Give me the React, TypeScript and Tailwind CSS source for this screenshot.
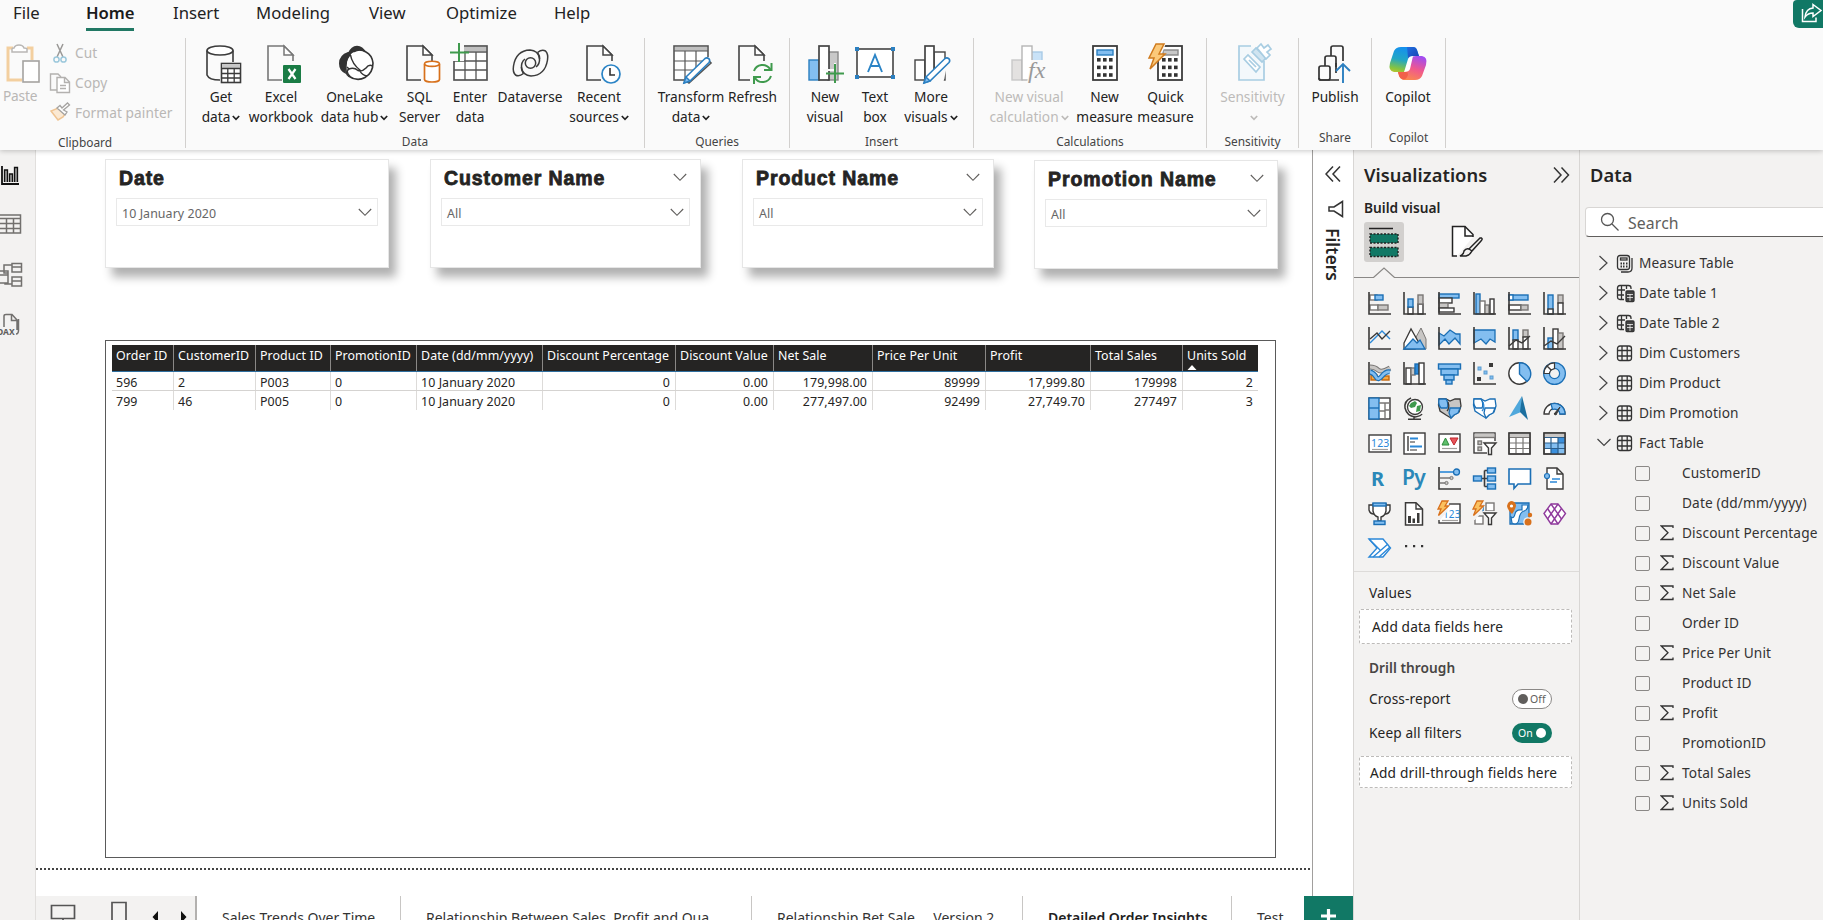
import React from 'react';

const K = '#3b3a39';
const B = '#83bef0';
const BS = '#1b6fb5';
const G = '#c8c6c4';
const GS = '#797775';

type BoxProps = { x: number; y: number; w: number; h: number; f?: string; s?: string; sw?: number; r?: number };
const Box = ({ x, y, w, h, f = '#fff', s = K, sw = 1.4, r = 0 }: BoxProps) => (
  <rect x={x} y={y} width={w} height={h} fill={f} stroke={s} strokeWidth={sw} rx={r} />
);
const Line = ({ d, s = K, w = 1.4, f = 'none' }: { d: string; s?: string; w?: number; f?: string }) => (
  <path d={d} stroke={s} strokeWidth={w} fill={f} />
);

/* ---------- Ribbon icons (40 x 40 grid) ---------- */
const Page = ({ x = 5, s = '#444' }: { x?: number; s?: string }) => (
  <g transform={`translate(${x} 0)`}>
    <Line d="M15 37H1V3H17L26 12V18" s={s} w={1.6} f="none" />
    <Line d="M17 3V12H26Z" s={s} w={1.5} f="#fff" />
  </g>
);
const Pencil = () => (
  <g>
    <path d="M36 16L15 38L18 40L40 20Z" fill="#fafafa" />
    <Line d="M15 34L34 15.5Q36 14 38 15.8Q39.4 18 38 19.5L19 38L13 40Z" s="#2b7fc0" w={1.6} f="#fff" />
    <path d="M15 34L19 38L13 40Z" fill="#83bef0" stroke="#2b7fc0" strokeWidth={1.4} />
  </g>
);
const Bolt = () => <path d="M9 0H17L12 10H18L3 25L7 14H2Z" fill="#fbc97a" stroke="#d07b1e" strokeWidth={1.5} />;
const Keys = ({ x }: { x: number }) => (
  <g fill="#333">
    {[0, 1, 2].map((r) => [0, 1, 2].map((c) => <rect key={`${r}${c}`} x={x + c * 6} y={15 + r * 7.6} width={3.6} height={3.6} />))}
  </g>
);

const ribbonIcons: Record<string, React.ReactNode> = {
  getData: (
    <g fill="none" stroke="#3b3b3b" strokeWidth={1.6}>
      <ellipse cx={19} cy={7.5} rx={13} ry={4.5} fill="#fff" />
      <path d="M6 7.5V32Q8 37 19 37M32 7.5V19" />
      <rect x={20.5} y={20.5} width={19} height={19} fill="#fff" />
      <rect x={21} y={21} width={18} height={4} fill="#c8c8c8" stroke="none" />
      <path d="M20 25.5H40M20 30.5H40M20 35H40M26.8 25V40M33.2 25V40" strokeWidth={1.3} />
    </g>
  ),
  excel: (
    <g>
      <Page x={6} s="#777" />
      <rect x={22} y={22} width={18} height={18} fill="#1a7c45" rx={1} />
      <path d="M27.500 26L34.500 36M34.500 26L27.500 36" stroke="#fff" strokeWidth={2.2} />
    </g>
  ),
  onelake: (
    <g transform="translate(0 0)">
      <path d="M13 10Q16 8.500 19 8.500Q25 5 31 9Q37 12 38 20Q38 30 30 34.500Q22 39 13.500 33Q10 30 11 22Q11 14 16 10Z" fill="#fff" stroke="#333" strokeWidth={1.600} />
      <path d="M13 9Q4 12 4 20.500Q4 28 11 31Q9 20 16 11.500Z" fill="#333" />
      <path d="M13 10Q16 3 22 2.700Q28 3 31 9Q22 5 15 11.500Z" fill="#333" />
      <path d="M15.500 12Q17 21 25.500 27.500M15 33.500Q10 28 14 26Q19 24 23 27.500Q27 29 31 25Q34 21 37.500 23M25 28Q27 32 32 33M12 24L14 26" fill="none" stroke="#333" strokeWidth={1.500} />
    </g>
  ),
  sql: (
    <g>
      <Page x={6} />
      <path d="M24 20H40V40H24Z" fill="#fafafa" />
      <path d="M24.5 21V36.5Q25 39 32 39Q39 39 39.5 36.5V21" fill="#fff" stroke="#d8711c" strokeWidth={1.7} />
      <ellipse cx={32} cy={20.8} rx={7.5} ry={2.6} fill="#fff" stroke="#d8711c" strokeWidth={1.6} />
    </g>
  ),
  enter: (
    <g fill="none" stroke="#555" strokeWidth={1.7}>
      <rect x={4} y={3} width={33} height={34} fill="#fff" />
      <rect x={5} y={4} width={31} height={4} fill="#c0c0c0" stroke="none" />
      <path d="M4 9H37M4 18H37M4 27H37M15 9V37M26 9V37" strokeWidth={1.3} />
      <path d="M0 0H14V18H0Z" fill="#fafafa" stroke="none" />
      <path d="M9 0V19M0 9.5H19" stroke="#3f9a4d" strokeWidth={2} />
    </g>
  ),
  dataverse: (
    <g fill="none" stroke="#3b3b3b" strokeWidth={1.500}>
      <circle cx={20.500} cy={20} r={5.200} />
      <path d="M13.500 30.500Q9 34 5.500 32Q2.500 29 3.500 23Q6 7.500 20 7Q28 7.500 29.500 15Q30 21 26 24" />
      <path d="M27.500 9.500Q32 6 35.500 8Q38.500 11 37.500 17Q35 32.500 21 33Q13 32.500 11.500 25Q11 19 15 16" />
      <path d="M13.500 30.500Q11 27 11.500 24M27.500 9.500Q30 13 29.500 16" />
    </g>
  ),
  recent: (
    <g>
      <Page x={7} />
      <circle cx={32} cy={31} r={11} fill="#fafafa" />
      <circle cx={32} cy={31} r={9} fill="#fff" stroke="#2b84c6" strokeWidth={1.7} />
      <path d="M31 25V32H36" fill="none" stroke="#333" strokeWidth={1.6} />
    </g>
  ),
  transform: (
    <g fill="none" stroke="#555" strokeWidth={1.6}>
      <rect x={3} y={3} width={34} height={34} fill="#fff" />
      <rect x={4} y={4} width={32} height={4} fill="#c0c0c0" stroke="none" />
      <path d="M3 8H37M3 18H37M3 27H37M14 8V37M25 8V37" strokeWidth={1.2} />
      <path d="M37 14L14 36L13 41H40V14Z" fill="#fafafa" stroke="none" />
      <Pencil />
    </g>
  ),
  refresh: (
    <g>
      <Page x={5} />
      <path d="M17 20H40V40H17Z" fill="#fafafa" />
      <g fill="none" stroke="#3f9a4d" strokeWidth={2}>
        <path d="M21 28A9 9 0 0 1 37 26M38.500 20V27H31M38 33A9 9 0 0 1 22 35M21 41V34H28" />
      </g>
    </g>
  ),
  newVisual: (
    <g>
      <Box x={4} y={17} w={10} h={20} f={B} s="#2b7fc0" />
      <Box x={23} y={9} w={10} h={28} f="#c8c8c8" s="#888" />
      <Box x={14} y={3} w={10} h={34} s="#444" sw={1.7} />
      <path d="M18 27H30V20" fill="none" stroke="#fafafa" strokeWidth={2} />
      <path d="M30 21V40M21 30.500H39" stroke="#3f9a4d" strokeWidth={2} />
    </g>
  ),
  textBox: (
    <g>
      <Box x={2} y={6} w={36} h={28} s="#444" sw={1.6} />
      <g fill="#2b7fc0">
        <path d="M0 4H4V8H0ZM36 4H40V8H36ZM0 32H4V36H0ZM36 32H40V36H36Z" />
      </g>
      <path d="M13 29L20 12L27 29M15.500 23H24.500" fill="none" stroke="#2b84c6" strokeWidth={1.9} />
    </g>
  ),
  moreVisuals: (
    <g>
      <Box x={4} y={17} w={10} h={20} s="#444" />
      <Box x={23} y={9} w={11} h={28} s="#444" />
      <Box x={14} y={3} w={9} h={34} s="#444" sw={1.7} />
      <path d="M38 14L14 36L13 41H32Z" fill="#fafafa" />
      <Pencil />
    </g>
  ),
  newCalc: (
    <g>
      <Box x={3} y={17} w={10} h={20} f="#e3e1e0" s="#c8c8c8" />
      <Box x={22} y={9} w={11} h={12} f="#c9e2f7" s="#a9cbe6" />
      <Box x={13} y={3} w={10} h={34} s="#b5b5b5" />
      <path d="M22 17H40V40H18Z" fill="#fafafa" />
      <text x={19} y={35} fontFamily="Liberation Serif" fontStyle="italic" fontSize={24} fill="#999">
        fx
      </text>
    </g>
  ),
  measure: (
    <g>
      <Box x={8} y={3} w={24} h={34} s="#3b3b3b" sw={1.8} />
      <Box x={12} y={7} w={16} h={5} f={B} s="#2b7fc0" />
      <Keys x={12} />
    </g>
  ),
  quick: (
    <g>
      <Box x={12} y={3} w={24} h={34} s="#3b3b3b" sw={1.8} />
      <Box x={17} y={7} w={15} h={5} f="#c8c8c8" s="#888" />
      <Keys x={16} />
      <path d="M4 0H20L17 8L8 26H4Z" fill="#fafafa" />
      <g transform="translate(1 1)">
        <Bolt />
      </g>
    </g>
  ),
  sensitivity: (
    <g fill="#fff" stroke="#a8cde2" strokeWidth={1.7}>
      <path d="M18 3H6V37H31V18" fill="#f3f8fb" />
      <path d="M11 16L15 12L27 24L23 29Z" />
      <path d="M16 17L23 24" />
      <path d="M19 9L23 5L33 15L29 19Z" fill="#cfe4f0" />
      <path d="M24 5L28 1L31 5L35 2L38 6L34 9L37 12L33 16Z" />
    </g>
  ),
  publish: (
    <g fill="#fafafa" stroke="#333" strokeWidth={1.7}>
      <path d="M16 37V5Q16 3 18 3H26Q28 3 28 5V18" />
      <path d="M10 37V15Q10 13 12 13H19Q21 13 21 15V37" />
      <path d="M8 24H30V40H8Z" stroke="none" />
      <rect x={4} y={23} width={11} height={14} rx={2} />
      <path d="M4 35Q4 37 6 37H24M21 20V30" fill="none" />
      <path d="M28 22V40M21 28L28 21L35 28" stroke="#2b7fc0" fill="none" strokeWidth={1.9} />
    </g>
  ),
  copilot: (
    <g>
      <defs>
        <linearGradient id="cpA" x1="0.4" y1="0" x2="0.2" y2="1">
          <stop offset="0" stopColor="#1590ee" />
          <stop offset="0.4" stopColor="#22a7c4" />
          <stop offset="0.7" stopColor="#86c440" />
          <stop offset="1" stopColor="#f5c51b" />
        </linearGradient>
        <linearGradient id="cpB" x1="0.7" y1="0" x2="0.3" y2="1">
          <stop offset="0" stopColor="#a24cf0" />
          <stop offset="0.5" stopColor="#f0588e" />
          <stop offset="1" stopColor="#fb8b4a" />
        </linearGradient>
        <linearGradient id="cpC" x1="0" y1="0" x2="1" y2="1">
          <stop offset="0" stopColor="#1f6fe0" />
          <stop offset="1" stopColor="#1b3fb0" />
        </linearGradient>
      </defs>
      <path d="M13 4H25Q28 4 29 7L31 13H26Q23 13 22 17L18 29Q17 37 12 34L10 29H6Q0 28 2 20L6 8Q8 4 13 4Z" fill="url(#cpA)" />
      <path d="M19 4H25Q28 4 29 7L31 13H26Q23 13 22 16L20 15Z" fill="url(#cpC)" />
      <path d="M31 13H34Q40 14 38 22L34 33Q32 37 27 37H17Q12 37 11 32L10 29H15Q18 29 19 26L23 16Q24 13 28 13Z" fill="url(#cpB)" />
      <path d="M10 29H15Q18 29 19 26L20 32Q18 37 15 36.500Q12 36 11 33Z" fill="#f2604a" />
      <path d="M17 26L20 16Q21 13 25 13L22 26Q21 29 16 29Z" fill="#fff" />
    </g>
  ),
};

const RibbonIcon = ({ name }: { name: string }) => (
  <svg width={40} height={42} viewBox="0 0 40 42" className="shrink-0 overflow-visible">
    {ribbonIcons[name]}
  </svg>
);

const Caret = () => (
  <svg width={8} height={6} viewBox="0 0 8 6" className="ml-[2px] inline-block align-middle">
    <path d="M0.800 1L4 4.300L7.200 1" fill="none" stroke="currentColor" strokeWidth={1.7} />
  </svg>
);

type Item = { icon: string; l1: string; l2?: string; caret?: boolean; w: string; off?: boolean };
const ribbon: { title: string; w: string; items: Item[] }[] = [
  {
    title: 'Data',
    w: 'w-[459px]',
    items: [
      { icon: 'getData', l1: 'Get', l2: 'data', caret: true, w: 'w-[70px]' },
      { icon: 'excel', l1: 'Excel', l2: 'workbook', w: 'w-[50px]' },
      { icon: 'onelake', l1: 'OneLake', l2: 'data hub', caret: true, w: 'w-[97px]' },
      { icon: 'sql', l1: 'SQL', l2: 'Server', w: 'w-[33px]' },
      { icon: 'enter', l1: 'Enter', l2: 'data', w: 'w-[68px]' },
      { icon: 'dataverse', l1: 'Dataverse', w: 'w-[52px]' },
      { icon: 'recent', l1: 'Recent', l2: 'sources', caret: true, w: 'w-[86px]' },
    ],
  },
  {
    title: 'Queries',
    w: 'w-[145px]',
    items: [
      { icon: 'transform', l1: 'Transform', l2: 'data', caret: true, w: 'w-[92px]' },
      { icon: 'refresh', l1: 'Refresh', w: 'w-[31px]' },
    ],
  },
  {
    title: 'Insert',
    w: 'w-[184px]',
    items: [
      { icon: 'newVisual', l1: 'New', l2: 'visual', w: 'w-[70px]' },
      { icon: 'textBox', l1: 'Text', l2: 'box', w: 'w-[30px]' },
      { icon: 'moreVisuals', l1: 'More', l2: 'visuals', caret: true, w: 'w-[82px]' },
    ],
  },
  {
    title: 'Calculations',
    w: 'w-[233px]',
    items: [
      { icon: 'newCalc', l1: 'New visual', l2: 'calculation', caret: true, w: 'w-[110px]', off: true },
      { icon: 'measure', l1: 'New', l2: 'measure', w: 'w-[41px]' },
      { icon: 'quick', l1: 'Quick', l2: 'measure', w: 'w-[81px]' },
    ],
  },
  { title: 'Sensitivity', w: 'w-[92px]', items: [{ icon: 'sensitivity', l1: 'Sensitivity', l2: '', caret: true, w: 'w-[91px]', off: true }] },
  { title: 'Share', w: 'w-[73px]', items: [{ icon: 'publish', l1: 'Publish', w: 'w-[72px]' }] },
  { title: 'Copilot', w: 'w-[74px]', items: [{ icon: 'copilot', l1: 'Copilot', w: 'w-[72px]' }] },
];

const Ribbon = () => (
  <div className="relative z-10 flex h-[150px] shrink-0 flex-col bg-[#fafafa] shadow-[0_1px_5px_rgba(0,0,0,0.22)]">
    <div className="flex h-[38px] items-start text-[16.700px] leading-[26px] text-[#222]">
      <span className="ml-[13px] w-[73px]">File</span>
      <span className="mr-[39px] h-[31px] w-[48px] whitespace-nowrap border-b-[3px] border-[#217864] font-semibold tracking-[-0.100px] text-[#1b1b1b]">Home</span>
      <span className="w-[83px]">Insert</span>
      <span className="w-[113px]">Modeling</span>
      <span className="w-[77px]">View</span>
      <span className="w-[108px]">Optimize</span>
      <span>Help</span>
      <div className="ml-auto flex h-[28px] w-[30px] items-center justify-start rounded-bl-md rounded-tl-sm bg-[#117865] pl-[8px]">
        <svg width={20} height={20} viewBox="0 0 20 20" className="shrink-0 overflow-visible">
          <path d="M1.500 5V17.500H15V13.500" fill="none" stroke="#fff" strokeWidth={1.500} />
          <path d="M12 0.500L20 6.500L12 12.500V9Q7 9 4 13Q5 4.500 12 4Z" fill="none" stroke="#fff" strokeWidth={1.500} />
        </svg>
      </div>
    </div>
    <div className="flex h-[110px] text-[13.7px] leading-[20px] text-[#222]">
      <div className="flex w-[186px] shrink-0 flex-col border-r border-[#d2d0ce] text-[#b9b7b5]">
        <div className="flex h-[92px]">
          <div className="flex w-[44px] flex-col pl-[3px] pt-[5px]">
            <svg width={40} height={42} viewBox="0 0 40 42">
              <path d="M10 5H5V37H19M24 5H29V17" fill="none" stroke="#f3cf9f" strokeWidth={3} />
              <path d="M9 8V6Q9 5 11 5Q12 2 16 2Q20 2 21 5Q24 5 24 6V9H9Z" fill="#fff" stroke="#b9b7b5" strokeWidth={1.500} />
              <rect x={20} y={18} width={16} height={21} fill="#fff" stroke="#a5a3a1" strokeWidth={1.600} />
            </svg>
            <span className="mt-[1px] tracking-[-0.200px]">Paste</span>
          </div>
          <div className="flex flex-col pl-[5px] tracking-[0.08px]">
            <div className="flex h-[30px] items-center">
              <svg width={22} height={22} viewBox="0 0 22 22" className="mr-[4px]">
                <path d="M8 2L14 15M14 2L8 15" stroke="#9a9896" strokeWidth={1.500} />
                <circle cx={7.500} cy={17.500} r={2.600} fill="none" stroke="#9cc8dc" strokeWidth={1.500} />
                <circle cx={14.500} cy={17.500} r={2.600} fill="none" stroke="#9cc8dc" strokeWidth={1.500} />
              </svg>
              Cut
            </div>
            <div className="flex h-[30px] items-center">
              <svg width={22} height={22} viewBox="0 0 22 22" className="mr-[4px]">
                <path d="M8 18H1.500V2H9L12 5" fill="none" stroke="#b3b1af" strokeWidth={1.400} />
                <path d="M8 5.500H16L20.500 10V20.500H8ZM15.500 5.500V10.500H20.500M11 13.500H17M11 16.500H17" fill="#fff" stroke="#b3b1af" strokeWidth={1.400} />
              </svg>
              Copy
            </div>
            <div className="flex h-[30px] items-center">
              <svg width={22} height={22} viewBox="0 0 22 22" className="mr-[4px]">
                <path d="M2 9L9 18L14 15L16 12L9 6Z" fill="#fbe9d3" stroke="#efc493" strokeWidth={1.500} />
                <path d="M8 6L16 13L18 10L14.500 8L20.500 3L18.500 1L13 6L11 3.500Z" fill="#fff" stroke="#a5a3a1" strokeWidth={1.300} />
              </svg>
              Format painter
            </div>
          </div>
        </div>
        <span className="w-[170px] pt-[3px] text-center text-[11.9px] leading-[22px] text-[#444]">Clipboard</span>
      </div>
      {ribbon.map((g) => (
        <div key={g.title} className={`flex shrink-0 flex-col border-r border-[#d2d0ce] ${g.w}`}>
          <div className="flex h-[92px] pt-[5px]">
            {g.items.map((it) => (
              <div key={it.icon} className={`flex shrink-0 flex-col items-center ${it.w} ${it.off ? 'text-[#bdbbb9]' : ''}`}>
                <RibbonIcon name={it.icon} />
                <span className="mt-[2px] whitespace-nowrap">{it.l1}</span>
                {it.l2 !== undefined && (
                  <span className="whitespace-nowrap">
                    {it.l2}
                    {it.caret && <Caret />}
                  </span>
                )}
              </div>
            ))}
          </div>
          <span className="pt-[3px] text-center text-[11.9px] leading-[22px] text-[#444]">{g.title}</span>
        </div>
      ))}
    </div>
  </div>
);

/* ---------- Left rail ---------- */
const Rail = () => (
  <div className="flex w-[36px] shrink-0 flex-col border-r border-[#e1dfdd] bg-[#f3f2f1]">
    <svg width={26} height={200} viewBox="0 0 26 200" fill="none" stroke="#72706e" strokeWidth={1.5}>
      <g stroke="#111">
        <path d="M2 16V34H19" strokeWidth={1.8} />
        <path d="M4.500 32V20H7.500V32M9.500 32V24H12.500V32M14.500 32V17.500H17.500V32" fill="#999" strokeWidth={1.3} />
      </g>
      <path d="M-1 65H20.500V83H-1M-1 68.500H20M-1 73.500H20M-1 78.500H20M6.500 68V83M13.500 68V83" />
      <path d="M-2 121H8V133H-2M-2 125H8M12 113.500H21.500V122H12ZM12 117H21M12 127H21.500V136H12ZM12 131H21M8 123H4V115H12M5 133V134H12" />
      <path d="M4 177V166Q4 164.500 6 164.500H12L17 170V180M11.500 165V170.500H17M18.500 169V180Q18.500 184 16 184" />
      <text x={-3} y={184.500} fontFamily="Noto Sans" fontWeight={700} fontSize={8.500} fill="#605e5c" stroke="none">
        DAX
      </text>
    </svg>
  </div>
);

/* ---------- Canvas ---------- */
const Chevron = ({ c = '' }: { c?: string }) => (
  <svg width={14} height={9} viewBox="0 0 14 9" className={`shrink-0 ${c}`}>
    <path d="M0.800 1L7 7.300L13.200 1" fill="none" stroke="#605e5c" strokeWidth={1.1} />
  </svg>
);

const slicers = [
  { title: 'Date', value: '10 January 2020', box: 'ml-[69px] w-[284px]', head: false },
  { title: 'Customer Name', value: 'All', box: 'ml-[41px] w-[271px]', head: true },
  { title: 'Product Name', value: 'All', box: 'ml-[41px] w-[252px]', head: true },
  { title: 'Promotion Name', value: 'All', box: 'ml-[40px] mt-px w-[244px]', head: true },
];

const columns = [
  { name: 'Order ID', w: 'w-[62px]', a: '596', b: '799', num: false },
  { name: 'CustomerID', w: 'w-[82px]', a: '2', b: '46', num: false },
  { name: 'Product ID', w: 'w-[75px]', a: 'P003', b: 'P005', num: false },
  { name: 'PromotionID', w: 'w-[86px]', a: '0', b: '0', num: false },
  { name: 'Date (dd/mm/yyyy)', w: 'w-[126px]', a: '10 January 2020', b: '10 January 2020', num: false },
  { name: 'Discount Percentage', w: 'w-[133px]', a: '0', b: '0', num: true },
  { name: 'Discount Value', w: 'w-[98px]', a: '0.00', b: '0.00', num: true },
  { name: 'Net Sale', w: 'w-[99px]', a: '179,998.00', b: '277,497.00', num: true },
  { name: 'Price Per Unit', w: 'w-[113px]', a: '89999', b: '92499', num: true },
  { name: 'Profit', w: 'w-[105px]', a: '17,999.80', b: '27,749.70', num: true },
  { name: 'Total Sales', w: 'w-[92px]', a: '179998', b: '277497', num: true },
  { name: 'Units Sold', w: 'w-[75px]', a: '2', b: '3', num: true },
];

const Canvas = () => (
  <div className="flex w-[1277px] shrink-0 flex-col border-r border-[#a19f9d] bg-white">
    <div className="flex h-[190px] shrink-0 items-start pt-[9px]">
      {slicers.map((s) => (
        <div key={s.title} className={`flex h-[109px] shrink-0 flex-col border border-[#e6e6e6] bg-white px-[10px] shadow-[7px_9px_9px_rgba(0,0,0,0.31)] ${s.box}`}>
          <div className="flex h-[38px] shrink-0 items-start justify-between pl-[3px] pr-[3px]">
            <span className="whitespace-nowrap font-['Liberation_Sans',sans-serif] text-[19.500px] font-bold leading-[37px] tracking-[0.900px] text-[#252423] [-webkit-text-stroke:0.800px_#252423]">{s.title}</span>
            {s.head && <Chevron c="mt-[13px]" />}
          </div>
          <div className="flex h-[28px] shrink-0 items-center justify-between border border-[#e9e9e9] pl-[5px] pr-[5px] pt-[1px] text-[12.4px] text-[#666] tracking-[0.080px]">
            <span className="pt-[3px]">{s.value}</span>
            <Chevron />
          </div>
        </div>
      ))}
    </div>
    <div className="ml-[69px] h-[518px] w-[1171px] shrink-0 border-[1.500px] border-[#5a5a5a] pl-[6px] pt-[4px] text-[12.4px] tracking-[0.080px]">
      <div className="flex h-[27px] w-[1146px] border-b border-[#2f6f9f] bg-[#252423] leading-[21px] text-white">
        {columns.map((c, i) => (
          <div key={c.name} className={`shrink-0 whitespace-nowrap pl-[4px] ${c.w} ${i < 11 ? 'border-r border-[#8a8886]' : ''}`}>
            {c.name}
            {i === 11 && (
              <svg width={10} height={5} viewBox="0 0 10 5" className="-mt-[1px] block">
                <path d="M5 0L9.500 5H0.500Z" fill="#fff" />
              </svg>
            )}
          </div>
        ))}
      </div>
      {(['a', 'b'] as const).map((k) => (
        <div key={k} className={`flex h-[19px] w-[1146px] leading-[21px] text-[#252423] ${k === 'a' ? 'border-b border-[#d5d3d1]' : ''}`}>
          {columns.map((c, i) => (
            <div key={c.name} className={`shrink-0 whitespace-nowrap pl-[4px] pr-[5px] ${c.w} ${c.num ? 'text-right' : ''} ${i < 11 ? 'border-r border-[#dddbd9]' : ''}`}>
              {c[k]}
            </div>
          ))}
        </div>
      ))}
    </div>
    <div className="mt-[10px] h-[2px] shrink-0 bg-[repeating-linear-gradient(90deg,#444_0,#444_2px,#fff_2px,#fff_4px)]" />
    <div className="mt-[26px] flex h-[24px] w-[1268px] shrink-0 overflow-hidden text-[14px] leading-[20px] text-[#333]">
      <div className="flex w-[161px] shrink-0 border-r-2 border-[#b3b1af] bg-[#f3f2f1] pl-px">
        <svg width={158} height={24} viewBox="0 0 158 24">
          <g fill="none" stroke="#555" strokeWidth={1.700}>
            <path d="M14.500 9.500H37.500V22.500H14.500ZM26 22V26" />
            <path d="M75 27V6.500H89V27" />
          </g>
          <path d="M121 15V27L115.500 21ZM144 15V27L149.500 21Z" fill="#111" />
        </svg>
      </div>
      <div className="w-[204px] shrink-0 whitespace-nowrap border-r border-[#c8c6c4] pl-[25px] pt-[12px]">Sales Trends Over Time</div>
      <div className="w-[351px] shrink-0 whitespace-nowrap border-r border-[#c8c6c4] pl-[25px] pt-[12px]">Relationship Between Sales, Profit and Qua...</div>
      <div className="w-[271px] shrink-0 whitespace-nowrap border-r border-[#c8c6c4] pl-[25px] pt-[12px]">Relationship Bet Sale... &nbsp;Version 2</div>
      <div className="w-[209px] shrink-0 whitespace-nowrap border-r border-[#c8c6c4] pl-[25px] pt-[12px] font-semibold text-[#222]">Detailed Order Insights</div>
      <div className="shrink-0 pl-[25px] pt-[12px]">Test</div>
    </div>
  </div>
);

/* ---------- Filters strip ---------- */
const Filters = () => (
  <div className="flex w-[40px] shrink-0 flex-col justify-between bg-white">
    <div className="flex flex-col items-center pt-[16px]">
      <svg width={16} height={16} viewBox="0 0 16 16" fill="none" stroke="#333" strokeWidth={1.5}>
        <path d="M8 0.500L1 8L8 15.500M15 0.500L8 8L15 15.500" />
      </svg>
      <svg width={16} height={18} viewBox="0 0 16 18" fill="none" stroke="#333" strokeWidth={1.5} className="ml-[6px] mt-[18px]">
        <path d="M14.500 1.500V16.500L6 11H1V7H6Z" />
      </svg>
      <span className="mt-[10px] text-[17.500px] font-semibold leading-[24px] text-[#252423] [writing-mode:vertical-rl]">Filters</span>
    </div>
    <div className="-ml-[9px] flex h-[24px] w-[49px] items-start justify-center bg-[#117865] pt-[13px]">
      <svg width={15} height={15} viewBox="0 0 15 15">
        <path d="M7.500 0V15M0 7H15" stroke="#fff" strokeWidth={3.200} />
      </svg>
    </div>
  </div>
);

/* ---------- Visual gallery (24 x 24 grid) ---------- */
const Axes = () => <Line d="M1 0V22H23" w={1.600} />;
const Grid = ({ b = false }: { b?: boolean }) => (
  <g>
    <Box x={1} y={1} w={21} h={21} s={b ? K : '#504e4c'} />
    {b && <path d="M15 6H22V22H8V17H15ZM2 11H15V17H2Z" fill={B} />}
    {b && <path d="M15 6H22V11H15ZM8 17H15V22H8Z" fill="#3a8fdc" />}
    <rect x={1.500} y={1.500} width={20} height={3.500} fill={G} />
    <Line d="M1 5.500H22M1 11H22M1 16.500H22M8 5.500V22M15 5.500V22" s={b ? '#2b5f8d' : GS} w={1.200} />
    <Box x={1} y={1} w={21} h={21} f="none" />
  </g>
);
const Flt = () => <path d="M11 11H23L18.500 16V22.500H15.500V16Z" fill="#fff" stroke={K} strokeWidth={1.400} />;
const MiniBolt = () => (
  <g>
    <path d="M-1 -2H12L9 10L2 18H-2Z" fill="#f3f2f1" />
    <path d="M4 -1H10L7 4H10.500L0.500 13.500L3 7H0Z" fill="#fbc15f" stroke="#d8711c" strokeWidth={1.300} />
  </g>
);
const Countries = ({ fill }: { fill: boolean }) => (
  <g strokeWidth={1.300}>
    <path d="M1 2H8L12 4L17 2H22L23 9L21 15L16 18L13 21L8 18L2 14L0.500 8Z" fill={fill ? G : '#fff'} stroke={fill ? K : BS} />
    <path d="M1 2H8Q11 6 9 11H3Q0 8 1 2Z" fill={fill ? B : '#fff'} stroke={BS} />
    <path d="M12 11H22L20 16L16 18L13 21L11 16Z" fill={fill ? B : '#fff'} stroke={BS} />
    <path d="M10 5Q12 11 9 14" fill="none" stroke={fill ? K : '#2b88d8'} />
  </g>
);

const gallery: React.ReactNode[] = [
  <g><Box x={2} y={3} w={7} h={5} s={GS} /><Box x={7} y={3} w={8} h={5} f={B} s={BS} /><Box x={2} y={13} w={8} h={5} s={GS} /><Box x={10} y={13} w={10} h={5} f={G} s={GS} /><Axes /></g>,
  <g><Box x={5} y={15} w={5} h={7} /><Box x={5} y={7} w={5} h={8} f={B} s={BS} /><Box x={15} y={12} w={5} h={10} /><Box x={15} y={3} w={5} h={9} f={G} s={GS} /><Axes /></g>,
  <g><Box x={1} y={2} w={20} h={4} f={B} s={BS} /><Box x={1} y={6} w={13} h={5} s={K} /><Box x={1} y={11} w={9} h={5} f={G} s={GS} /><Box x={1} y={16} w={15} h={4} /><Axes /></g>,
  <g><Box x={3} y={2} w={4} h={20} f={B} s={BS} /><Box x={7} y={9} w={5} h={13} s={GS} /><Box x={12} y={13} w={4} h={9} f={G} s={GS} /><Box x={17} y={7} w={4} h={15} s={K} /><Axes /></g>,
  <g><Box x={1} y={3} w={19} h={5} f={B} s={BS} /><Box x={1} y={13} w={12} h={5} /><Box x={13} y={13} w={7} h={5} f={G} s={GS} /><Box x={1} y={3} w={4} h={5} s={BS} /><Axes /></g>,
  <g><Box x={5} y={3} w={5} h={19} f={B} s={BS} /><Box x={5} y={17} w={5} h={5} s={K} /><Box x={15} y={3} w={5} h={8} f={G} s={GS} /><Box x={15} y={11} w={5} h={11} /><Axes /></g>,

  <g><Line d="M2 16L8 10L14 4L22 12" s="#2b88d8" /><Line d="M2 12L9 6L14 12L19 7L22 4" /><Axes /></g>,
  <g><path d="M12 12L18 1L23 12V22H12Z" fill={G} stroke={GS} /><path d="M1 16L8 2L16 16L12 22H1Z" fill="#fff" stroke={K} strokeWidth={1.300} /><path d="M1 22L10 12L14 16L17 13L22 22Z" fill={B} stroke={BS} strokeWidth={1.300} /></g>,
  <g><path d="M1 6L6 9L12 3L18 7H22V17L17 11L11 17L7 12L1 18Z" fill={B} stroke={BS} strokeWidth={1.300} /><Axes /></g>,
  <g><path d="M1 3H22V15L17 12L13 17L8 12L1 16Z" fill={B} stroke={BS} strokeWidth={1.300} /><Axes /></g>,
  <g><Box x={5} y={3} w={5} h={10} f={B} s={BS} /><Box x={5} y={13} w={5} h={9} /><Box x={15} y={3} w={5} h={7} f={G} s={GS} /><Box x={15} y={10} w={5} h={12} /><Line d="M1 19L8 13L14 16L22 9" /><Axes /></g>,
  <g><Box x={5} y={11} w={5} h={11} f={B} s={BS} /><Box x={10} y={2} w={5} h={20} /><Box x={15} y={6} w={5} h={16} f={G} s={GS} /><Line d="M1 19L8 14L14 17L22 9" /><Axes /></g>,

  <g fill="none"><Box x={3} y={13} w={6} h={5} f="#f5a742" s="#c4660c" /><Box x={14} y={14} w={7} h={4} f="#f5a742" s="#c4660c" /><path d="M2 5Q7 5 10 8T22 6" stroke={GS} strokeWidth={5} /><path d="M2 5Q7 5 10 8T22 6" stroke={G} strokeWidth={3} /><path d="M2 10Q6 11 8 15T14 14T22 10" stroke={BS} strokeWidth={5} /><path d="M2 10Q6 11 8 15T14 14T22 10" stroke={B} strokeWidth={2.600} /><Axes /></g>,
  <g><Box x={3} y={6} w={5} h={16} /><Box x={8} y={6} w={4} h={7} f={G} s={GS} /><Box x={12} y={2} w={4} h={10} f="#2b88d8" s={BS} /><Box x={16} y={1} w={5} h={21} /><Axes /></g>,
  <g><Box x={0.500} y={2} w={22} h={5} f={B} s={BS} /><Box x={3} y={7} w={17} h={6} f={B} s={BS} /><Box x={6} y={13} w={10} h={5} f={B} s={BS} /><Box x={8} y={18} w={6} h={4} f={B} s={BS} /></g>,
  <g><path d="M16 1H20V5H16ZM4 15H8V19H4Z" fill={K} /><Box x={5} y={5} w={3} h={3} f={B} s="#5b9bd0" sw={1} /><Box x={11} y={9} w={3} h={3} f={B} s="#5b9bd0" sw={1} /><Box x={17} y={14} w={3} h={3} f={B} s="#5b9bd0" sw={1} /><Axes /></g>,
  <g><circle cx={11.500} cy={11.500} r={10.700} fill="#fff" stroke={K} strokeWidth={1.400} /><path d="M11.500 0.800A10.700 10.700 0 0 1 19 19.500L11.500 12Z" fill={B} stroke={BS} strokeWidth={1.400} /></g>,
  <g><circle cx={11.500} cy={11.500} r={8} fill="none" stroke={BS} strokeWidth={7} /><circle cx={11.500} cy={11.500} r={8} fill="none" stroke={B} strokeWidth={4.600} /><path d="M4 4A10.700 10.700 0 0 1 11.500 0.800V6.500L8 8Z" fill="#fff" stroke={K} strokeWidth={1.200} /><path d="M1 11.500A10.700 10.700 0 0 1 4 4L8 8Q6.500 10 6.500 11.500Z" fill="#fff" stroke={K} strokeWidth={1.200} /></g>,

  <g><Box x={1} y={1} w={21} h={21} /><Box x={1} y={1} w={10} h={21} f={B} s={BS} /><Line d="M1 11H11" s={BS} /><Line d="M11 6H22M17 6V22M11 14H17M17 13H22" s={GS} /></g>,
  <g><circle cx={12} cy={10} r={7.500} fill="#fff" stroke={K} strokeWidth={1.300} /><path d="M8 6L12 4L14 6L12 10L8 11L6 9ZM14 9L18 8L17 14L13 15Z" fill="#3f9a4d" /><path d="M8 1Q1 4 2 11Q4 19 12 20Q18 19 19 17M11 20V22M5 22.300H18" fill="none" stroke={K} strokeWidth={1.500} /></g>,
  <Countries fill />,
  <Countries fill={false} />,
  <g><path d="M14 -1L1 20L13 15Z" fill="#4fa8dc" /><path d="M14 -1L20 23L12 15Z" fill="#1b6f9f" /></g>,
  <g><path d="M1 17A10.500 10.500 0 0 1 22 17H17A5.500 5.500 0 0 0 6 17Z" fill="#fff" stroke={K} strokeWidth={1.300} /><path d="M8 7A10.500 10.500 0 0 1 22 17H17A5.500 5.500 0 0 0 9.500 12.500Z" fill={B} stroke={BS} strokeWidth={1.300} /><path d="M11 17L17 10L13 18Z" fill={K} stroke={K} /></g>,

  <g><Box x={1} y={3} w={22} h={17} /><text x={3} y={15} fontFamily="Noto Sans" fontSize={10.500} fill="#2b88d8">123</text><Line d="M4 17.500H20" s="#a19f9d" w={1.200} /></g>,
  <g><Box x={1} y={1} w={21} h={21} /><Line d="M5 4V19" s={K} /><Line d="M7 6.500H15M7 14.500H19" s="#2b88d8" w={2} /><Line d="M7 10H12M7 18H14" s={GS} /></g>,
  <g><Box x={1} y={2} w={21} h={18} /><path d="M4 13L7.500 6L11 13Z" fill="#5fbf6c" stroke="#2d8a3a" /><path d="M12 6H20L16 13Z" fill="#e8545b" stroke="#c1272d" /><Line d="M4 16.500H19" s="#a19f9d" w={1.200} /></g>,
  <g><Box x={1} y={1} w={21} h={20} /><rect x={1.500} y={1.500} width={20} height={3.500} fill={G} /><Line d="M1 5.500H22" s={GS} /><Box x={5} y={9} w={3.500} h={3.500} s={GS} f={G} /><Box x={5} y={15} w={3.500} h={3.500} s={GS} f={G} /><path d="M10 9H25V24H14V16Z" fill="#f3f2f1" /><Flt /></g>,
  <Grid />,
  <Grid b />,

  <text x={3} y={19} fontFamily="Noto Sans" fontWeight={700} fontSize={20} fill="#2b88b8">R</text>,
  <text x={-1} y={18} fontFamily="Noto Sans" fontWeight={600} fontSize={21} fill="#2b88b8" textLength={24}>Py</text>,
  <g><Axes /><Line d="M2 5H17" s="#2b88d8" w={1.600} /><circle cx={18.500} cy={5} r={3} fill={B} stroke={BS} strokeWidth={1.300} /><Line d="M2 11H13M2 16H8" s={GS} /><circle cx={13.500} cy={11} r={1.600} fill={G} stroke={GS} /><circle cx={8.500} cy={16} r={1.600} fill={G} stroke={GS} /></g>,
  <g><Line d="M8 11.500H15M11.500 3.500V19.500M11.500 3.500H15M11.500 19.500H15" w={1.600} /><Box x={0.500} y={9} w={8} h={5} f={B} s={BS} /><Box x={14.500} y={1} w={8} h={5} f={B} s={BS} /><Box x={14.500} y={9} w={8} h={5} f={B} s={BS} /><Box x={14.500} y={17} w={8} h={5} f={B} s={BS} /></g>,
  <path d="M1 2H22.500V17H10L6 21.500V17H1Z" fill="#fff" stroke={BS} strokeWidth={1.600} />,
  <g><path d="M4 6V1H14L20 7V22H4V12" fill="#fff" stroke={K} strokeWidth={1.400} /><Line d="M14 1V7H20" /><circle cx={4} cy={9} r={2.500} fill={B} stroke={BS} strokeWidth={1.200} /><Line d="M9 12H17M7 15H14" s="#2b88d8" /></g>,

  <g fill="#fff" stroke={K} strokeWidth={1.400}><path d="M5 3H1V8Q2 12 6 12M18 3H22V8Q21 12 17 12" /><path d="M5 2H18V9Q17 14 13 15V19H10V15Q6 14 5 9Z" /><rect x={5} y={1} width={13} height={3} fill={B} stroke={BS} /><rect x={6} y={19} width={11} height={3.500} fill={B} stroke={BS} /></g>,
  <g transform="translate(1 0)"><path d="M1.500 0.800H12L18.500 7V23H1.500Z" fill="#fff" stroke={K} strokeWidth={1.500} /><Line d="M12 1V7H18" /><path d="M4 14H7V21H4ZM8.500 16.500H11V21H8.500ZM13 11H15.500V21H13Z" fill={K} /></g>,
  <g><Box x={1} y={2} w={21} h={19} /><text x={5} y={16} fontFamily="Noto Sans" fontSize={10} fill="#2b88d8">123</text><Line d="M4 18.500H20" s="#a19f9d" w={1.200} /><MiniBolt /></g>,
  <g><Box x={13} y={1} w={8} h={8} s={GS} /><Box x={2} y={14} w={8} h={8} s={GS} /><Box x={5} y={2} w={5} h={7} f={B} s={BS} /><path d="M9 9H25V24H14V16Z" fill="#f3f2f1" /><Flt /><MiniBolt /></g>,
  <g><path d="M2 1H21V22H2Z" fill={B} stroke={BS} strokeWidth={1.300} /><path d="M3 15Q6 17 7 12T14 8V3H20Q20 8 16 9T11 17T4 21Z" fill="#fff" stroke={BS} strokeWidth={1.200} /><path d="M-1 4Q0 -1 4 -1Q8 0 8 4Q7 8 4 12Q0 9 -1 4Z" fill="#d8711c" /><circle cx={3.500} cy={4} r={1.600} fill="#fff" /><circle cx={20} cy={20} r={4.800} fill="#f3f2f1" /><circle cx={20} cy={20} r={3.500} fill="#d8711c" /><circle cx={22} cy={13} r={2.200} fill="#d8711c" /></g>,
  <g fill="#fff" stroke="#8f3a9c" strokeWidth={1.400}><path d="M1 11.500L8 2H15L22.500 11.500L15 22H8Z" /><path d="M8 2L18.500 17M15 2L4.500 17M4.500 6.500L15 22M18.500 6.500L8 22" fill="none" /></g>,

  <g fill="#fff" stroke="#2b88d8" strokeWidth={1.400}><path d="M1 2H15L22.500 11L15 20H1L9 11Z" /><path d="M5 20L20 7M11 20L22 10M1 2L12 13" fill="none" /></g>,
  <g fill="#333"><path d="M2 8H4.200V10.200H2ZM10 8H12.200V10.200H10ZM18 8H20.200V10.200H18Z" /></g>,
];

const Visualizations = () => (
  <div className="flex w-[227px] shrink-0 flex-col border-x border-[#d8d6d4] bg-[#f3f2f1] text-[13.700px] tracking-[0.120px] text-[#252423]">
    <div className="flex h-[50px] items-center justify-between pl-[10px] pr-[9px]">
      <span className="text-[18.300px] font-semibold tracking-[0.050px]">Visualizations</span>
      <svg width={17} height={16} viewBox="0 0 17 16" fill="none" stroke="#333" strokeWidth={1.500}>
        <path d="M1 0.500L8 8L1 15.500M8.500 0.500L15.500 8L8.500 15.500" />
      </svg>
    </div>
    <span className="-mt-[2px] h-[24px] pl-[10px] text-[13.700px] font-semibold leading-[20px] tracking-[0px]">Build visual</span>
    <div className="flex h-[40px] pl-[10px]">
      <div className="flex size-[40px] items-center justify-center rounded-[3px] bg-[#d2d0ce]">
        <svg width={32} height={32} viewBox="0 0 32 32">
          <path d="M1 2.500H25" stroke="#222" strokeWidth={1.500} />
          <rect x={2} y={8} width={28} height={9} fill="#117865" stroke="#222" strokeWidth={1.400} strokeDasharray="2 1.5" />
          <rect x={2} y={21.500} width={28} height={9} fill="#117865" stroke="#222" strokeWidth={1.400} strokeDasharray="2 1.5" />
        </svg>
      </div>
      <svg width={34} height={34} viewBox="0 0 34 34" className="ml-[47px] mt-[3px]" fill="#fff" stroke="#222" strokeWidth={1.500}>
        <path d="M6 31H1.500V1.500H14L22 9.500V12" />
        <path d="M14 1.500V11H22" fill="none" />
        <path d="M30.500 13Q32 14 30 16L21 26Q19 30 15 31H9Q13 29 13 26Q15 23 18 24L29 13Z" fill="#f3f2f1" />
        <path d="M18 24L21 26" />
      </svg>
    </div>
    <svg width={225} height={16} viewBox="0 0 225 16" className="shrink-0">
      <path d="M0 15.500H19.500L30 6L40.500 15.500H225" fill="none" stroke="#8a8886" strokeWidth={1.200} />
    </svg>
    <div className="mt-[14px] grid grid-cols-[repeat(6,35px)] auto-rows-[35px] pl-[14px]">
      {gallery.map((g, i) => (
        <svg key={i} width={24} height={24} viewBox="0 0 24 24" className="overflow-visible">
          {g}
        </svg>
      ))}
    </div>
    <div className="-mt-[1px] flex flex-col border-t border-[#dddbd9] pl-[5px] pr-[7px] pt-[8px]">
      <span className="pl-[10px] leading-[26px]">Values</span>
      <div className="mt-[3px] h-[35px] rounded-[2px] border border-dashed border-[#bdbbb9] bg-white pl-[12px] leading-[34px]">Add data fields here</div>
      <span className="mt-[11px] pl-[10px] text-[13.700px] font-semibold leading-[26px] tracking-[0.050px] text-[#484644]">Drill through</span>
      <div className="mt-[5px] flex h-[26px] items-center justify-between pl-[10px] pr-[20px]">
        <span>Cross-report</span>
        <div className="flex h-[20px] w-[40px] items-center rounded-full border border-[#8a8886] bg-white pl-[5px] text-[10.500px] text-[#605e5c]">
          <span className="mr-[2px] size-[10px] rounded-full bg-[#605e5c]" />
          <span className="pt-[1px]">Off</span>
        </div>
      </div>
      <div className="mt-[8px] flex h-[26px] items-center justify-between pl-[10px] pr-[20px]">
        <span>Keep all filters</span>
        <div className="flex h-[20px] w-[40px] items-center rounded-full bg-[#117865] pl-[6px] text-[10.500px] text-white">
          <span className="pt-[1px]">On</span>
          <span className="ml-[3px] size-[10px] rounded-full bg-white" />
        </div>
      </div>
      <div className="mt-[10px] h-[32px] whitespace-nowrap rounded-[2px] border border-dashed border-[#bdbbb9] bg-white pl-[10px] leading-[32px] tracking-[0.200px]">Add drill-through fields here</div>
    </div>
  </div>
);

/* ---------- Data pane ---------- */
const TableGlyph = ({ kind }: { kind: string }) => (
  <svg width={19} height={19} viewBox="0 0 19 19" fill="none" stroke="#333" strokeWidth={1.300} className="shrink-0">
    {kind === 'calc' && (
      <g>
        <rect x={1.500} y={1.500} width={12} height={14} rx={2.500} />
        <rect x={4.500} y={4} width={6.500} height={2} />
        <path d="M16 4V14Q16 18 12 18H5" />
        <path d="M4.500 9.500H6M7 9.500H8.500M10 9.500H11.500M4.500 12.500H6M7 12.500H8.500M10 12.500H11.500" strokeWidth={1.800} />
      </g>
    )}
    {kind === 'table' && (
      <g>
        <rect x={1.500} y={2} width={14} height={14.500} rx={2.500} />
        <path d="M1.500 6.500H15.500M1.500 12H15.500M6 2V16.500M11.200 2V16.500" />
      </g>
    )}
    {kind === 'date' && (
      <g>
        <path d="M8 15.500H4Q1.500 15.500 1.500 13V4Q1.500 1.500 4 1.500H12.500Q15 1.500 15 4V5M1.500 6H9M1.500 11H8M5.500 1.500V15.500M10.500 1.500V5" />
        <rect x={10} y={7} width={8} height={10.500} rx={1} fill="#444" />
        <path d="M11 10.500H17M11 13.500H17M14 10V17" stroke="#f3f2f1" strokeWidth={0.800} />
      </g>
    )}
  </svg>
);

const tables = [
  ['Measure Table', 'calc'],
  ['Date table 1', 'date'],
  ['Date Table 2', 'date'],
  ['Dim Customers', 'table'],
  ['Dim Product', 'table'],
  ['Dim Promotion', 'table'],
  ['Fact Table', 'table'],
];
const fields: [string, boolean][] = [
  ['CustomerID', false],
  ['Date (dd/mm/yyyy)', false],
  ['Discount Percentage', true],
  ['Discount Value', true],
  ['Net Sale', true],
  ['Order ID', false],
  ['Price Per Unit', true],
  ['Product ID', false],
  ['Profit', true],
  ['PromotionID', false],
  ['Total Sales', true],
  ['Units Sold', true],
];

const DataPane = () => (
  <div className="flex min-w-0 flex-1 flex-col overflow-hidden bg-[#f3f2f1] text-[13.700px] tracking-[0.120px] text-[#333]">
    <span className="h-[57px] pl-[10px] text-[18.300px] font-semibold leading-[50px] tracking-[0.050px] text-[#252423]">Data</span>
    <div className="-mr-[10px] ml-[5px] flex h-[30px] items-center rounded-[4px] border border-[#d8d6d4] border-b-[#605e5c] bg-white pl-[14px]">
      <svg width={20} height={20} viewBox="0 0 20 20" fill="none" stroke="#555" strokeWidth={1.300}>
        <circle cx={7.500} cy={7.500} r={6} />
        <path d="M12 12L18.500 18.500" />
      </svg>
      <span className="ml-[8px] pt-[3px] text-[15.800px] text-[#605e5c]">Search</span>
    </div>
    <div className="mt-[11px] flex flex-col">
      {tables.map(([name, kind], i) => (
        <div key={name} className="flex h-[30px] items-center pl-[17px]">
          {i < 6 ? (
            <svg width={14} height={16} viewBox="0 0 14 16" className="mr-[5px]" fill="none" stroke="#444" strokeWidth={1.200}>
              <path d="M2.500 1L10 8L2.500 15" />
            </svg>
          ) : (
            <svg width={14} height={16} viewBox="0 0 14 16" className="mr-[5px]" fill="none" stroke="#444" strokeWidth={1.200}>
              <path d="M0.500 4L7 10.500L13.500 4" />
            </svg>
          )}
          <TableGlyph kind={kind} />
          <span className="ml-[4px] whitespace-nowrap">{name}</span>
        </div>
      ))}
      {fields.map(([name, sum]) => (
        <div key={name} className="flex h-[30px] items-center pl-[55px]">
          <span className="size-[15px] shrink-0 rounded-[2px] border border-[#8a8886]" />
          <svg width={14} height={16} viewBox="0 0 14 16" className="ml-[10px] mr-[8px] shrink-0" fill="none" stroke="#333" strokeWidth={1.300}>
            {sum && <path d="M13 3V1H1.200L8 7.800L1.200 14.500H13V12.500" />}
          </svg>
          <span className="whitespace-nowrap">{name}</span>
        </div>
      ))}
    </div>
  </div>
);

export default function App() {
  return (
    <div className="flex h-[920px] w-[1823px] flex-col overflow-hidden bg-white font-['Noto_Sans',sans-serif]">
      <Ribbon />
      <div className="flex h-[770px]">
        <Rail />
        <Canvas />
        <Filters />
        <Visualizations />
        <DataPane />
      </div>
    </div>
  );
}
